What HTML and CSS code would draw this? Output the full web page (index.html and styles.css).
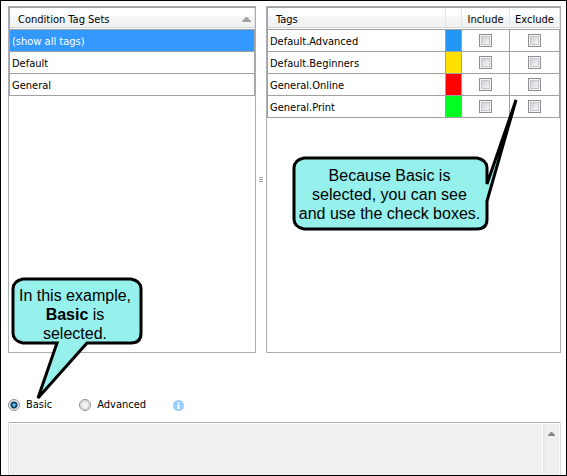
FILE: index.html
```html
<!DOCTYPE html>
<html lang="en">
<head>
<meta charset="utf-8">
<title>Condition tags</title>
<link rel="stylesheet" href="styles.css">
</head>
<body>
<main class="window">
  <div class="panels">
    <section class="panel">
      <table class="grid">
        <thead>
          <tr><th><div class="head-cell">Condition Tag Sets
            <svg class="sort" viewBox="0 0 9 5" aria-hidden="true"><path d="M0 5V4L4 0H5L9 4V5Z"/></svg></div></th></tr>
        </thead>
        <tbody>
          <tr class="selected"><td>(show all tags)</td></tr>
          <tr><td>Default</td></tr>
          <tr><td>General</td></tr>
        </tbody>
      </table>
      <div class="callout callout-basic">
        <svg class="bubble" viewBox="0 0 132 124" aria-hidden="true">
          <path d="M12 2H120Q130 4 130 12V56Q130 66 120 66H76L27 121L46 66H12Q2 64 2 56V12Q2 4 12 2Z"/>
        </svg>
        <p>In this example,<br><b>Basic</b> is<br>selected.</p>
      </div>
    </section>
    <div class="splitter"><span class="grip"></span></div>
    <section class="panel">
      <table class="grid">
        <colgroup><col><col class="col-color"><col class="col-include"><col class="col-exclude"></colgroup>
        <thead>
          <tr><th><div class="head-cell">Tags</div></th><th><div class="head-cell"></div></th><th><div class="head-cell centered">Include</div></th><th><div class="head-cell centered">Exclude</div></th></tr>
        </thead>
        <tbody>
          <tr><td>Default.Advanced</td><td class="blue"></td><td class="check"><input type="checkbox" aria-label="Include Default.Advanced"></td><td class="check"><input type="checkbox" aria-label="Exclude Default.Advanced"></td></tr>
          <tr><td>Default.Beginners</td><td class="yellow"></td><td class="check"><input type="checkbox" aria-label="Include Default.Beginners"></td><td class="check"><input type="checkbox" aria-label="Exclude Default.Beginners"></td></tr>
          <tr><td>General.Online</td><td class="red"></td><td class="check"><input type="checkbox" aria-label="Include General.Online"></td><td class="check"><input type="checkbox" aria-label="Exclude General.Online"></td></tr>
          <tr><td>General.Print</td><td class="green"></td><td class="check"><input type="checkbox" aria-label="Include General.Print"></td><td class="check"><input type="checkbox" aria-label="Exclude General.Print"></td></tr>
        </tbody>
      </table>
      <div class="callout callout-checks">
        <svg class="bubble" viewBox="0 0 226 132" aria-hidden="true">
          <path d="M12 59H185Q195 61 195 69V85L224 1L195 102V120Q195 130 185 130H12Q2 128 2 120V69Q2 61 12 59Z"/>
        </svg>
        <p>Because Basic is<br>selected, you can see<br>and use the check boxes.</p>
      </div>
    </section>
  </div>
  <div class="modes">
    <label class="mode"><input type="radio" name="mode" checked>Basic</label>
    <label class="mode"><input type="radio" name="mode">Advanced</label>
    <svg class="info" viewBox="0 0 11 11" role="img" aria-label="Information"><circle cx="5.5" cy="5.5" r="5.5"/><path d="M4.5 2H6.5V3.5H4.5ZM4 4.5H6.5V8H7V9H4V8H4.5V5.5H4Z"/></svg>
  </div>
  <div class="expression">
    <textarea readonly aria-label="Expression"></textarea>
    <div class="scrollbar"><svg viewBox="0 0 7 4" aria-hidden="true"><path d="M0 4V3L3 0H4L7 3V4Z"/></svg></div>
  </div>
</main>
</body>
</html>
```
FILE: styles.css
```css
* { box-sizing: border-box; }

body {
  margin: 0;
  font: 11px/14px "DejaVu Sans Condensed", "Noto Sans", sans-serif;
  color: #000;
  background: #fff;
}

.window {
  display: flex;
  flex-direction: column;
  height: 100vh;
  border: 1px solid #000;
  padding: 5px 5px 0 7px;
}

.panels {
  flex: 1;
  display: grid;
  grid-template-columns: 248fr 10px 295fr;
}

.panel {
  position: relative;
  min-width: 0;
  border: 1px solid #abadb3;
}

.grid {
  width: 100%;
  table-layout: fixed;
  border-collapse: separate;
  border-spacing: 0;
  border-left: 1px solid #a0a0a0;
  border-top: 1px solid #a0a0a0;
}

.grid th {
  height: 22px;
  padding: 0;
  border-bottom: 1px solid #a0a0a0;
  font-weight: normal;
  text-align: left;
}

.grid td {
  height: 22px;
  padding: 2px 2px 0;
  border-right: 1px solid #a0a0a0;
  border-bottom: 1px solid #a0a0a0;
}

.head-cell {
  display: flex;
  align-items: center;
  justify-content: space-between;
  height: 20px;
  margin-bottom: 1px;
  padding: 4px 3px 0 8px;
  border-right: 1px solid #e0e2e4;
  border-bottom: 1px solid #d5d5d5;
  background: linear-gradient(#fff 40%, #f5f6f8 45%, #f1f2f4);
}

.head-cell.centered {
  justify-content: center;
  padding: 4px 0 0;
}

.sort {
  width: 9px;
  height: 5px;
  fill: #a0a0a0;
}

.grid .selected td {
  color: #fff;
  background: #39f;
}

.col-color { width: 16px; }
.col-include { width: 48px; }
.col-exclude { width: 50px; }

.grid .blue { background: #2196f3; }
.grid .yellow { background: #ffe100; }
.grid .red { background: #f00; }
.grid .green { background: #00ff21; }

.grid .check {
  padding: 0;
  text-align: center;
  line-height: 0;
}

.check input {
  appearance: none;
  width: 13px;
  height: 13px;
  margin: 0;
  padding: 2px;
  border: 1px solid #8e8f8f;
  background: linear-gradient(135deg, #cbcfd5, #f7f7f7) content-box, #c4c8cd padding-box;
  box-shadow: inset 0 0 0 1px #f4f4f4;
}

.splitter {
  display: flex;
  align-items: center;
  justify-content: center;
}

.grip {
  width: 4px;
  height: 5px;
  background: repeating-linear-gradient(#a0a0a0 0 1px, #fff 1px 2px);
}

.callout {
  position: absolute;
  z-index: 1;
  font: 16px/19px "Liberation Sans", Arial, sans-serif;
  text-align: center;
  white-space: nowrap;
}

.callout p {
  position: relative;
  margin: 0;
}

.bubble {
  position: absolute;
  left: 0;
  top: 0;
  width: 100%;
  height: 100%;
  fill: #96f0ec;
  stroke: #000;
  stroke-width: 3;
}

.callout-basic {
  left: 2px;
  bottom: -49px;
  width: 132px;
  height: 124px;
  padding: 9px 4px 0 0;
}

.callout-checks {
  right: 42px;
  top: 92px;
  width: 226px;
  height: 132px;
  padding: 67px 31px 0 0;
}

.modes {
  display: flex;
  align-items: center;
  height: 24px;
  margin: 40px 0 5px;
}

.mode {
  display: flex;
  align-items: center;
  gap: 6px;
  margin-right: 27px;
}

.mode input {
  appearance: none;
  width: 12px;
  height: 12px;
  margin: 0;
  border: 1px solid #8e8f8f;
  border-radius: 50%;
  background: radial-gradient(circle, #f4f4f4 30%, #d2d5d8 60%, #eee 70%);
}

.mode input:checked {
  background: radial-gradient(circle at 50% 50%, #5cc4ee 0 1px, #1b5f8c 2px, #0d3350 3px, #e8e8e8 4px);
}

.info {
  width: 11px;
  height: 11px;
  fill: #99ccff;
}

.info path { fill: #fff; }

.expression {
  display: flex;
  height: 53px;
  padding: 1px 1px 0;
  border: 1px solid #dcdde8;
  border-top-color: #abadb3;
  border-bottom: 0;
  border-radius: 2px 2px 0 0;
}

.expression textarea {
  flex: 1;
  min-width: 0;
  margin: 0;
  padding: 2px;
  border: 0;
  outline: 0;
  resize: none;
  background: #f0f0f0;
  font: inherit;
}

.scrollbar {
  width: 17px;
  padding-top: 8px;
  border-left: 1px solid #fafafa;
  background: linear-gradient(90deg, #e3e3e3, #eee 20%, #f0f0f0 85%, #e6e6e6);
  text-align: center;
  line-height: 0;
}

.scrollbar svg {
  width: 7px;
  height: 4px;
  fill: #858585;
}
```
